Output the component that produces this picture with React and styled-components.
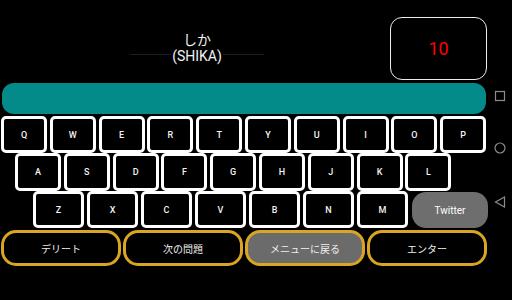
import React from 'react';
import styled, { createGlobalStyle } from 'styled-components';

const GlobalStyle = createGlobalStyle`
  html, body { margin: 0; padding: 0; background: #000; }
  body { font-family: Roboto, "Noto Sans CJK JP", sans-serif; }
`

const Screen = styled.div`
  width: 512px;
  height: 300px;
  display: flex;
  background: #000;
  overflow: hidden;
`

const Main = styled.div`
  width: 488px;
  display: flex;
  flex-direction: column;
`

const Header = styled.div`
  height: 83px;
  display: flex;
`

const TitleArea = styled.div`
  width: 390px;
  padding-top: 31px;
  box-sizing: border-box;
  display: flex;
  flex-direction: column;
  align-items: center;
  color: #f2f2f2;
  font-size: 14px;
  line-height: 17px;
`

const Kana = styled.div`
  font-family: "Noto Sans CJK JP", sans-serif;
  margin-left: 4px;
`

const Reading = styled.div`
  display: flex;
  align-items: center;
  width: 134px;
  margin-left: 4px;
`

const Rule = styled.span`
  flex: 1;
  height: 1px;
  margin-top: -5px;
  background: #1e1e1e;
`

const ReadingText = styled.span`
  padding: 0 1px;
  font-family: Roboto, sans-serif;
`

const ScoreBox = styled.div`
  width: 97px;
  height: 63px;
  margin-top: 17px;
  box-sizing: border-box;
  border: 1.5px solid #ededed;
  border-radius: 12px;
  display: flex;
  align-items: center;
  justify-content: center;
  color: #ff0000;
  font-size: 18px;
  font-family: Roboto, sans-serif;
`

const Progress = styled.div`
  height: 31px;
  margin: 0 2px;
  background: #038b8a;
  border-radius: 12px;
`

const KeyRow = styled.div`
  display: flex;
  height: ${p => p.$h}px;
  padding-left: ${p => p.$indent}px;
  gap: ${p => p.$gap}px;
  margin-top: ${p => p.$top || 0}px;
`

const Key = styled.div`
  width: ${p => p.$w}px;
  height: 100%;
  box-sizing: border-box;
  border: 3px solid #fff;
  border-radius: 5px;
  background: #000;
  color: #f4f4f4;
  font-family: Roboto, sans-serif;
  font-weight: 500;
  font-size: 9px;
  display: flex;
  align-items: center;
  justify-content: center;
`

const TwitterButton = styled.div`
  width: 76px;
  height: 36px;
  margin-left: 1px;
  margin-top: 1px;
  background: #6e6e6e;
  border-radius: 14px;
  color: #fff;
  font-family: Roboto, sans-serif;
  font-size: 10px;
  display: flex;
  align-items: center;
  justify-content: center;
`

const ActionRow = styled.div`
  display: flex;
  gap: 2px;
  margin-top: 2px;
  padding-left: 1px;
`

const ActionButton = styled.div`
  width: 120px;
  height: 36px;
  box-sizing: border-box;
  border: 3px solid #daa520;
  border-radius: 15px;
  background: ${p => (p.$muted ? '#6b6b6b' : '#000')};
  color: #f0f0f0;
  font-family: "Noto Sans CJK JP", sans-serif;
  font-size: 10px;
  display: flex;
  align-items: center;
  justify-content: center;
`

const NavBar = styled.div`
  width: 24px;
  display: flex;
  flex-direction: column;
  align-items: center;
  padding-top: 90px;
  gap: 40px;
`

const NavIcon = styled.svg`
  width: 12px;
  height: 12px;
  stroke: #8c8c8c;
  fill: none;
  stroke-width: 1.2;
`

const row1 = ['Q', 'W', 'E', 'R', 'T', 'Y', 'U', 'I', 'O', 'P']
const row2 = ['A', 'S', 'D', 'F', 'G', 'H', 'J', 'K', 'L']
const row3 = ['Z', 'X', 'C', 'V', 'B', 'N', 'M']
const actions = ['デリート', '次の問題', 'メニューに戻る', 'エンター']

const App = () => {
  return (
    <Screen>
      <GlobalStyle />
      <Main>
        <Header>
          <TitleArea>
            <Kana>しか</Kana>
            <Reading>
              <Rule />
              <ReadingText>(SHIKA)</ReadingText>
              <Rule />
            </Reading>
          </TitleArea>
          <ScoreBox>10</ScoreBox>
        </Header>
        <Progress />
        <KeyRow $h={37} $indent={1} $gap={2.8} $top={2}>
          {row1.map(k => <Key key={k} $w={46}>{k}</Key>)}
        </KeyRow>
        <KeyRow $h={38} $indent={15} $gap={2.8}>
          {row2.map(k => <Key key={k} $w={46}>{k}</Key>)}
        </KeyRow>
        <KeyRow $h={37} $indent={33} $gap={3}>
          {row3.map(k => <Key key={k} $w={51}>{k}</Key>)}
          <TwitterButton>Twitter</TwitterButton>
        </KeyRow>
        <ActionRow>
          {actions.map(a => (
            <ActionButton key={a} $muted={a === 'メニューに戻る'}>{a}</ActionButton>
          ))}
        </ActionRow>
      </Main>
      <NavBar>
        <NavIcon viewBox="0 0 12 12">
          <rect x="1.5" y="1.5" width="9" height="9" />
        </NavIcon>
        <NavIcon viewBox="0 0 12 12">
          <circle cx="6" cy="6" r="5" />
        </NavIcon>
        <NavIcon viewBox="0 0 12 12" style={{ height: 16 }}>
          <polygon points="10.5,1 10.5,11 1.5,6" />
        </NavIcon>
      </NavBar>
    </Screen>
  );
};

export default App;
